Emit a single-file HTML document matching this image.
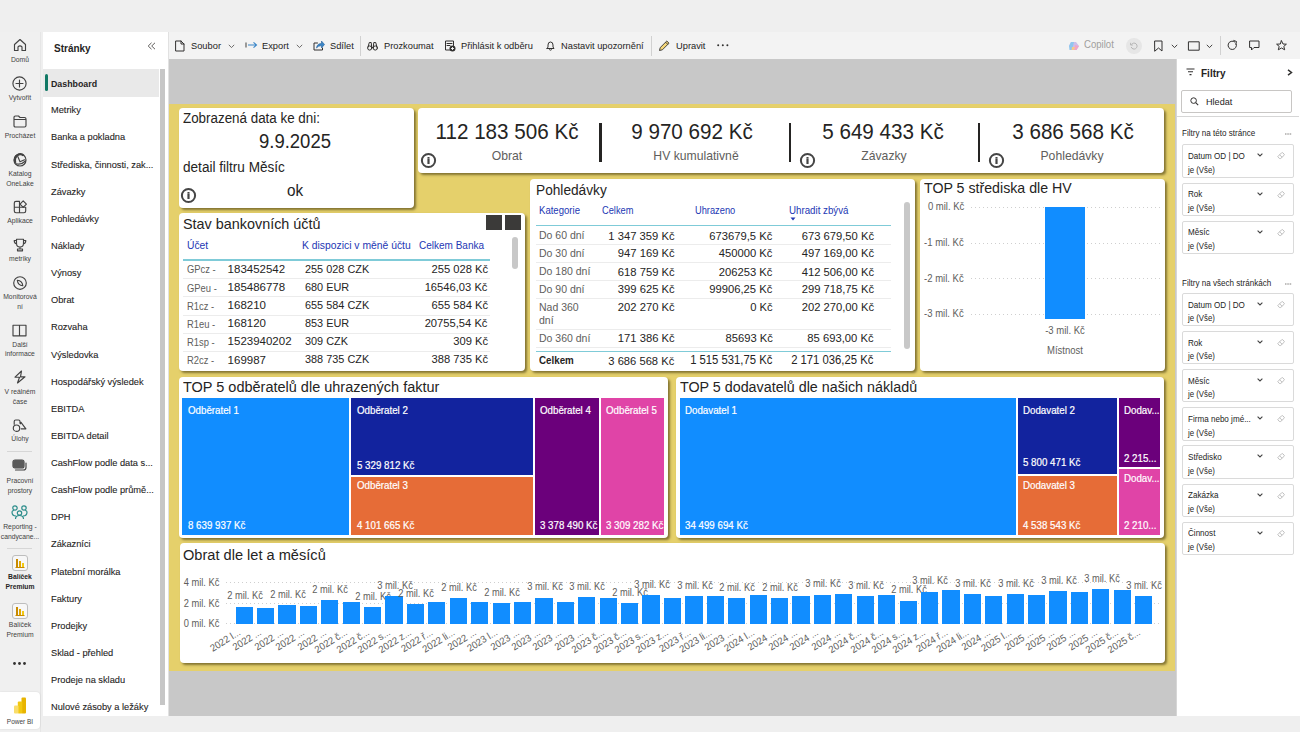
<!DOCTYPE html><html><head><meta charset="utf-8"><style>
*{margin:0;padding:0;box-sizing:border-box}
html,body{width:1300px;height:732px;overflow:hidden;background:#efefef;font-family:"Liberation Sans",sans-serif;color:#252423;position:relative}
.ab{position:absolute}
.t{position:absolute;white-space:nowrap;line-height:1}
.card{position:absolute;background:#fff;border-radius:4px;box-shadow:2px 2px 2.5px rgba(50,40,0,.55)}
svg{position:absolute;overflow:visible}
</style></head><body>
<div class="ab" style="left:0;top:32px;width:41px;height:700px;background:#f0f0f0;border-right:1px solid #e6e6e6"></div>
<div class="ab" style="left:43px;top:32px;width:125px;height:684px;background:#fff"></div>
<div class="ab" style="left:168px;top:32px;width:1132px;height:27px;background:#f3f3f3;border-left:1px solid #e1e1e1"></div>
<div class="ab" style="left:168px;top:59px;width:1008px;height:657px;background:#c8c8c8;border-left:1px solid #e1e1e1"></div>
<div class="ab" style="left:169px;top:104px;width:1006px;height:567px;background:#e5d06b"></div>
<div class="ab" style="left:1176px;top:59px;width:124px;height:657px;background:#fff;border-left:1px solid #d6d6d6"></div>
<svg style="left:13px;top:38px;" width="14" height="14" viewBox="0 0 14 14"><path d="M1.5 6.5 L7 1.5 L12.5 6.5 V12.5 H9 V8.8 Q7 6.8 5 8.8 V12.5 H1.5 Z" fill="none" stroke="#424242" stroke-width="1.15" stroke-linejoin="round" stroke-linecap="round"/></svg>
<div class="t" style="left:-280.00px;width:600px;text-align:center;top:56.96px;font-size:7.14px;color:#424242;font-weight:normal;transform:scaleX(0.952);transform-origin:50% 0;">Domů</div>
<svg style="left:12px;top:76px;" width="15" height="15" viewBox="0 0 15 15"><circle cx="7.5" cy="7.5" r="6.6" fill="none" stroke="#424242" stroke-width="1.15" stroke-linejoin="round" stroke-linecap="round"/><path d="M7.5 4 V11 M4 7.5 H11" fill="none" stroke="#424242" stroke-width="1.15" stroke-linejoin="round" stroke-linecap="round"/></svg>
<div class="t" style="left:-280.00px;width:600px;text-align:center;top:94.66px;font-size:7.14px;color:#424242;font-weight:normal;transform:scaleX(0.952);transform-origin:50% 0;">Vytvořit</div>
<svg style="left:13px;top:115px;" width="14" height="13" viewBox="0 0 14 13"><path d="M1 2.5 Q1 1 2.5 1 H5.5 L7 2.5 H11.5 Q13 2.5 13 4 V10.5 Q13 12 11.5 12 H2.5 Q1 12 1 10.5 Z M1 4.5 H13" fill="none" stroke="#424242" stroke-width="1.15" stroke-linejoin="round" stroke-linecap="round"/></svg>
<div class="t" style="left:-280.00px;width:600px;text-align:center;top:132.96px;font-size:7.14px;color:#424242;font-weight:normal;transform:scaleX(0.952);transform-origin:50% 0;">Procházet</div>
<svg style="left:12.5px;top:152.5px;" width="14" height="14" viewBox="0 0 14 14"><circle cx="7" cy="7" r="6" fill="none" stroke="#424242" stroke-width="1.15" stroke-linejoin="round" stroke-linecap="round"/><path d="M2.2 10 Q0.6 4 6 1.3 Q9 0.8 10.5 2.5" fill="none" stroke="#424242" stroke-width="2.2"/><path d="M4.8 3.5 L7 8.8 L11.5 6.8 M3.5 10.8 Q8 12.2 12.5 8" fill="none" stroke="#424242" stroke-width="1.15" stroke-linejoin="round" stroke-linecap="round"/></svg>
<div class="t" style="left:-280.00px;width:600px;text-align:center;top:171.26px;font-size:7.14px;color:#424242;font-weight:normal;transform:scaleX(0.952);transform-origin:50% 0;">Katalog</div>
<div class="t" style="left:-280.00px;width:600px;text-align:center;top:180.66px;font-size:7.14px;color:#424242;font-weight:normal;transform:scaleX(0.952);transform-origin:50% 0;">OneLake</div>
<svg style="left:12.5px;top:200px;" width="15" height="14" viewBox="0 0 15 14"><path d="M6.5 1.3 H3 Q1.3 1.3 1.3 3 V11 Q1.3 12.7 3 12.7 H11 Q12.7 12.7 12.7 11 V7.2 H6.5 Z M1.3 7.2 H6.5 V12.7" fill="none" stroke="#424242" stroke-width="1.15" stroke-linejoin="round" stroke-linecap="round"/><path d="M10.2 0.9 L13.4 4.1 L10.2 7.3 L7 4.1Z" fill="none" stroke="#424242" stroke-width="1.15" stroke-linejoin="round" stroke-linecap="round"/></svg>
<div class="t" style="left:-280.00px;width:600px;text-align:center;top:218.16px;font-size:7.14px;color:#424242;font-weight:normal;transform:scaleX(0.952);transform-origin:50% 0;">Aplikace</div>
<svg style="left:13px;top:238px;" width="14" height="14" viewBox="0 0 14 14"><path d="M3.5 1.2 H10.5 V5.5 Q10.5 9 7 9 Q3.5 9 3.5 5.5Z M3.5 2.5 H1.2 Q1.2 5.5 3.7 6 M10.5 2.5 H12.8 Q12.8 5.5 10.3 6 M7 9 V11 M4.5 12.8 H9.5 V11 H4.5Z" fill="none" stroke="#424242" stroke-width="1.15" stroke-linejoin="round" stroke-linecap="round"/></svg>
<div class="t" style="left:-280.00px;width:600px;text-align:center;top:256.46px;font-size:7.14px;color:#424242;font-weight:normal;transform:scaleX(0.952);transform-origin:50% 0;">metriky</div>
<svg style="left:12.5px;top:276px;" width="14" height="14" viewBox="0 0 14 14"><circle cx="7" cy="7" r="6.3" fill="none" stroke="#424242" stroke-width="1.15" stroke-linejoin="round" stroke-linecap="round"/><path d="M4.3 4.3 Q9.3 4.8 9.8 9.7 Q4.8 9.3 4.3 4.3Z" fill="none" stroke="#424242" stroke-width="1.15" stroke-linejoin="round" stroke-linecap="round"/></svg>
<div class="t" style="left:-280.00px;width:600px;text-align:center;top:294.36px;font-size:7.14px;color:#424242;font-weight:normal;transform:scaleX(0.952);transform-origin:50% 0;">Monitorová</div>
<div class="t" style="left:-280.00px;width:600px;text-align:center;top:303.86px;font-size:7.14px;color:#424242;font-weight:normal;transform:scaleX(0.952);transform-origin:50% 0;">ní</div>
<svg style="left:12px;top:324px;" width="15" height="13" viewBox="0 0 15 13"><path d="M1 1.2 H14 V11.8 H1Z M7.5 1.2 V11.8" fill="none" stroke="#424242" stroke-width="1.15" stroke-linejoin="round" stroke-linecap="round"/></svg>
<div class="t" style="left:-280.00px;width:600px;text-align:center;top:341.56px;font-size:7.14px;color:#424242;font-weight:normal;transform:scaleX(0.952);transform-origin:50% 0;">Další</div>
<div class="t" style="left:-280.00px;width:600px;text-align:center;top:351.36px;font-size:7.14px;color:#424242;font-weight:normal;transform:scaleX(0.952);transform-origin:50% 0;">informace</div>
<svg style="left:13px;top:370px;" width="14" height="14" viewBox="0 0 14 14"><path d="M8.5 1 L2 7.2 H6.5 L4.5 13 L12 6.8 H7.5Z" fill="none" stroke="#424242" stroke-width="1.15" stroke-linejoin="round" stroke-linecap="round"/></svg>
<div class="t" style="left:-280.00px;width:600px;text-align:center;top:388.96px;font-size:7.14px;color:#424242;font-weight:normal;transform:scaleX(0.952);transform-origin:50% 0;">V reálném</div>
<div class="t" style="left:-280.00px;width:600px;text-align:center;top:398.86px;font-size:7.14px;color:#424242;font-weight:normal;transform:scaleX(0.952);transform-origin:50% 0;">čase</div>
<svg style="left:12px;top:418px;" width="15" height="14" viewBox="0 0 15 14"><circle cx="4.5" cy="10.2" r="3.2" fill="none" stroke="#424242" stroke-width="1.15" stroke-linejoin="round" stroke-linecap="round"/><path d="M2.2 6.3 V3.5 Q2.2 2 3.7 2 H6.5 Q8 2 8 3.5 V5.2 M8.4 5.8 L9 4.3 L13.9 10.8 H9.2" fill="none" stroke="#424242" stroke-width="1.15" stroke-linejoin="round" stroke-linecap="round"/></svg>
<div class="t" style="left:-280.00px;width:600px;text-align:center;top:435.66px;font-size:7.14px;color:#424242;font-weight:normal;transform:scaleX(0.952);transform-origin:50% 0;">Úlohy</div>
<div class="ab" style="left:7px;top:451px;width:25px;height:1px;background:#d6d6d6"></div>
<svg style="left:12px;top:459px;" width="16" height="14" viewBox="0 0 16 14"><rect x="1" y="1" width="11" height="8" rx="2" fill="none" stroke="#424242" stroke-width="1.15" stroke-linejoin="round" stroke-linecap="round"/><path d="M3.5 11 H11.5 Q14 11 14 8.5 V4" fill="none" stroke="#424242" stroke-width="1.15" stroke-linejoin="round" stroke-linecap="round" stroke-width="2.2"/><rect x="1" y="1" width="11" height="8" rx="2" fill="#5a5a5a"/></svg>
<div class="t" style="left:-280.00px;width:600px;text-align:center;top:477.56px;font-size:7.14px;color:#424242;font-weight:normal;transform:scaleX(0.952);transform-origin:50% 0;">Pracovní</div>
<div class="t" style="left:-280.00px;width:600px;text-align:center;top:487.56px;font-size:7.14px;color:#424242;font-weight:normal;transform:scaleX(0.952);transform-origin:50% 0;">prostory</div>
<svg style="left:11px;top:505px;" width="17" height="15" viewBox="0 0 17 15"><circle cx="4" cy="3" r="2.2" fill="none" stroke="#2a8c8a" stroke-width="1.2"/><circle cx="13" cy="3" r="2.2" fill="none" stroke="#2a8c8a" stroke-width="1.2"/><circle cx="8.5" cy="8" r="2.2" fill="none" stroke="#2a8c8a" stroke-width="1.2"/><path d="M1 7 Q1 5.5 3 5.5 M16 7 Q16 5.5 14 5.5 M4.5 14 Q4.5 10.5 8.5 10.5 Q12.5 10.5 12.5 14" fill="none" stroke="#2a8c8a" stroke-width="1.2"/><path d="M1 7 Q1 11 5 11 M16 7 Q16 11 12 11" fill="none" stroke="#2a8c8a" stroke-width="1.2"/></svg>
<div class="t" style="left:-280.00px;width:600px;text-align:center;top:524.36px;font-size:7.14px;color:#424242;font-weight:normal;transform:scaleX(0.952);transform-origin:50% 0;">Reporting -</div>
<div class="t" style="left:-280.00px;width:600px;text-align:center;top:534.36px;font-size:7.14px;color:#424242;font-weight:normal;transform:scaleX(0.952);transform-origin:50% 0;">candycane...</div>
<div class="ab" style="left:7px;top:548px;width:25px;height:1px;background:#d6d6d6"></div>
<svg style="left:12px;top:555px;" width="16" height="16" viewBox="0 0 16 16"><rect x="0.5" y="0.5" width="15" height="15" rx="2.5" fill="#f7f7f7" stroke="#bdbdbd"/><rect x="4" y="4" width="2" height="8" fill="#c88a00"/><rect x="7" y="6" width="2" height="6" fill="#e0a800"/><rect x="10" y="8" width="2" height="4" fill="#f2c811"/><rect x="3.5" y="12" width="9" height="1" fill="#c88a00"/></svg>
<div class="t" style="left:-280.00px;width:600px;text-align:center;top:574.36px;font-size:7.14px;color:#252423;font-weight:bold;transform:scaleX(0.952);transform-origin:50% 0;">Balíček</div>
<div class="t" style="left:-280.00px;width:600px;text-align:center;top:583.86px;font-size:7.14px;color:#252423;font-weight:bold;transform:scaleX(0.952);transform-origin:50% 0;">Premium</div>
<svg style="left:12px;top:603px;" width="16" height="16" viewBox="0 0 16 16"><rect x="0.5" y="0.5" width="15" height="15" rx="2.5" fill="#f7f7f7" stroke="#bdbdbd"/><rect x="4" y="4" width="2" height="8" fill="#c88a00"/><rect x="7" y="6" width="2" height="6" fill="#e0a800"/><rect x="10" y="8" width="2" height="4" fill="#f2c811"/><rect x="3.5" y="12" width="9" height="1" fill="#c88a00"/></svg>
<div class="t" style="left:-280.00px;width:600px;text-align:center;top:622.36px;font-size:7.14px;color:#424242;font-weight:normal;transform:scaleX(0.952);transform-origin:50% 0;">Balíček</div>
<div class="t" style="left:-280.00px;width:600px;text-align:center;top:631.86px;font-size:7.14px;color:#424242;font-weight:normal;transform:scaleX(0.952);transform-origin:50% 0;">Premium</div>
<svg style="left:13px;top:662px;" width="13" height="3" viewBox="0 0 13 3"><circle cx="1.5" cy="1.5" r="1.4" fill="#323130"/><circle cx="6.5" cy="1.5" r="1.4" fill="#323130"/><circle cx="11.5" cy="1.5" r="1.4" fill="#323130"/></svg>
<div class="ab" style="left:0;top:692px;width:40px;height:37px;background:#fff;border-radius:0 4px 4px 0;box-shadow:0 0 2px rgba(0,0,0,.12)"></div>
<svg style="left:13px;top:697px;" width="14" height="17" viewBox="0 0 14 17"><rect x="8.5" y="0.5" width="4.5" height="16" rx="1" fill="#e8b400"/><rect x="4.8" y="4.5" width="4.5" height="12" rx="1" fill="#f2c811"/><rect x="1" y="8.5" width="4.5" height="8" rx="1" fill="#f9dd6b"/></svg>
<div class="t" style="left:-280.00px;width:600px;text-align:center;top:718.62px;font-size:6.83px;color:#424242;font-weight:normal;transform:scaleX(0.952);transform-origin:50% 0;">Power BI</div>
<div class="t" style="left:53.70px;top:42.71px;font-size:10.5px;color:#252423;font-weight:bold;transform:scaleX(0.952);transform-origin:0 0;">Stránky</div>
<svg style="left:147px;top:42px;" width="9" height="8" viewBox="0 0 9 8"><path d="M4.5 0.8 L1.2 4 L4.5 7.2 M8 0.8 L4.7 4 L8 7.2" fill="none" stroke="#605e5c" stroke-width="1"/></svg>
<div class="ab" style="left:43px;top:69px;width:116px;height:27.5px;background:#e9e9e9"></div>
<div class="ab" style="left:45.3px;top:73.7px;width:2.8px;height:17.3px;background:#117865;border-radius:1.5px"></div>
<div class="ab" style="left:159.6px;top:69px;width:5px;height:636.4px;background:#c6c6c6"></div>
<div class="t" style="left:51.20px;top:78.54px;font-size:9.4px;color:#252423;font-weight:bold;transform:scaleX(0.94);transform-origin:0 0;">Dashboard</div>
<div class="t" style="left:51.20px;top:105.33px;font-size:9.8px;color:#252423;font-weight:normal;-webkit-text-stroke:0.1px #252423;transform:scaleX(0.945);transform-origin:0 0;">Metriky</div>
<div class="t" style="left:51.20px;top:132.46px;font-size:9.8px;color:#252423;font-weight:normal;-webkit-text-stroke:0.1px #252423;transform:scaleX(0.945);transform-origin:0 0;">Banka a pokladna</div>
<div class="t" style="left:51.20px;top:159.59px;font-size:9.8px;color:#252423;font-weight:normal;-webkit-text-stroke:0.1px #252423;transform:scaleX(0.945);transform-origin:0 0;">Střediska, činnosti, zak...</div>
<div class="t" style="left:51.20px;top:186.72px;font-size:9.8px;color:#252423;font-weight:normal;-webkit-text-stroke:0.1px #252423;transform:scaleX(0.945);transform-origin:0 0;">Závazky</div>
<div class="t" style="left:51.20px;top:213.85px;font-size:9.8px;color:#252423;font-weight:normal;-webkit-text-stroke:0.1px #252423;transform:scaleX(0.945);transform-origin:0 0;">Pohledávky</div>
<div class="t" style="left:51.20px;top:240.98px;font-size:9.8px;color:#252423;font-weight:normal;-webkit-text-stroke:0.1px #252423;transform:scaleX(0.945);transform-origin:0 0;">Náklady</div>
<div class="t" style="left:51.20px;top:268.11px;font-size:9.8px;color:#252423;font-weight:normal;-webkit-text-stroke:0.1px #252423;transform:scaleX(0.945);transform-origin:0 0;">Výnosy</div>
<div class="t" style="left:51.20px;top:295.24px;font-size:9.8px;color:#252423;font-weight:normal;-webkit-text-stroke:0.1px #252423;transform:scaleX(0.945);transform-origin:0 0;">Obrat</div>
<div class="t" style="left:51.20px;top:322.37px;font-size:9.8px;color:#252423;font-weight:normal;-webkit-text-stroke:0.1px #252423;transform:scaleX(0.945);transform-origin:0 0;">Rozvaha</div>
<div class="t" style="left:51.20px;top:349.50px;font-size:9.8px;color:#252423;font-weight:normal;-webkit-text-stroke:0.1px #252423;transform:scaleX(0.945);transform-origin:0 0;">Výsledovka</div>
<div class="t" style="left:51.20px;top:376.63px;font-size:9.8px;color:#252423;font-weight:normal;-webkit-text-stroke:0.1px #252423;transform:scaleX(0.945);transform-origin:0 0;">Hospodářský výsledek</div>
<div class="t" style="left:51.20px;top:403.76px;font-size:9.8px;color:#252423;font-weight:normal;-webkit-text-stroke:0.1px #252423;transform:scaleX(0.945);transform-origin:0 0;">EBITDA</div>
<div class="t" style="left:51.20px;top:430.89px;font-size:9.8px;color:#252423;font-weight:normal;-webkit-text-stroke:0.1px #252423;transform:scaleX(0.945);transform-origin:0 0;">EBITDA detail</div>
<div class="t" style="left:51.20px;top:458.02px;font-size:9.8px;color:#252423;font-weight:normal;-webkit-text-stroke:0.1px #252423;transform:scaleX(0.945);transform-origin:0 0;">CashFlow podle data s...</div>
<div class="t" style="left:51.20px;top:485.15px;font-size:9.8px;color:#252423;font-weight:normal;-webkit-text-stroke:0.1px #252423;transform:scaleX(0.945);transform-origin:0 0;">CashFlow podle průmě...</div>
<div class="t" style="left:51.20px;top:512.28px;font-size:9.8px;color:#252423;font-weight:normal;-webkit-text-stroke:0.1px #252423;transform:scaleX(0.945);transform-origin:0 0;">DPH</div>
<div class="t" style="left:51.20px;top:539.41px;font-size:9.8px;color:#252423;font-weight:normal;-webkit-text-stroke:0.1px #252423;transform:scaleX(0.945);transform-origin:0 0;">Zákazníci</div>
<div class="t" style="left:51.20px;top:566.54px;font-size:9.8px;color:#252423;font-weight:normal;-webkit-text-stroke:0.1px #252423;transform:scaleX(0.945);transform-origin:0 0;">Platební morálka</div>
<div class="t" style="left:51.20px;top:593.67px;font-size:9.8px;color:#252423;font-weight:normal;-webkit-text-stroke:0.1px #252423;transform:scaleX(0.945);transform-origin:0 0;">Faktury</div>
<div class="t" style="left:51.20px;top:620.80px;font-size:9.8px;color:#252423;font-weight:normal;-webkit-text-stroke:0.1px #252423;transform:scaleX(0.945);transform-origin:0 0;">Prodejky</div>
<div class="t" style="left:51.20px;top:647.93px;font-size:9.8px;color:#252423;font-weight:normal;-webkit-text-stroke:0.1px #252423;transform:scaleX(0.945);transform-origin:0 0;">Sklad - přehled</div>
<div class="t" style="left:51.20px;top:675.06px;font-size:9.8px;color:#252423;font-weight:normal;-webkit-text-stroke:0.1px #252423;transform:scaleX(0.945);transform-origin:0 0;">Prodeje na skladu</div>
<div class="t" style="left:51.20px;top:702.19px;font-size:9.8px;color:#252423;font-weight:normal;-webkit-text-stroke:0.1px #252423;transform:scaleX(0.945);transform-origin:0 0;">Nulové zásoby a ležáky</div>
<svg style="left:175px;top:39.5px;" width="10" height="12" viewBox="0 0 10 12"><path d="M1 1 H6 L9 4 V11 H1Z M6 1 V4 H9" fill="none" stroke="#323130" stroke-width="1" stroke-linejoin="round" stroke-linecap="round"/></svg>
<div class="t" style="left:190.80px;top:40.73px;font-size:9.77px;color:#252423;font-weight:normal;transform:scaleX(0.952);transform-origin:0 0;">Soubor</div>
<svg style="left:227.5px;top:43.5px;" width="7" height="5" viewBox="0 0 7 5"><path d="M0.8 0.8 L3.5 3.6 L6.2 0.8" fill="none" stroke="#605e5c" stroke-width="0.9"/></svg>
<svg style="left:244.5px;top:41px;" width="13" height="8" viewBox="0 0 13 8"><path d="M1 1.5 V6.5" stroke="#605e5c" stroke-width="1.2"/><path d="M3 4 H11.5 M8.5 1.3 L11.5 4 L8.5 6.7" fill="none" stroke="#3a86c8" stroke-width="1.1"/></svg>
<div class="t" style="left:262.00px;top:40.73px;font-size:9.77px;color:#252423;font-weight:normal;transform:scaleX(0.952);transform-origin:0 0;">Export</div>
<svg style="left:296px;top:43.5px;" width="7" height="5" viewBox="0 0 7 5"><path d="M0.8 0.8 L3.5 3.6 L6.2 0.8" fill="none" stroke="#605e5c" stroke-width="0.9"/></svg>
<svg style="left:312.5px;top:39.5px;" width="12" height="11" viewBox="0 0 12 11"><path d="M4.5 3 H1 V10 H9.5 V8" fill="none" stroke="#323130" stroke-width="1" stroke-linejoin="round" stroke-linecap="round"/><path d="M3.5 8 Q4 3.5 8.5 3.5 V1 L11.5 4.5 L8.5 8 V5.6 Q5 5.8 3.5 8Z" fill="#3a86c8" stroke="#245f9a" stroke-width=".6"/></svg>
<div class="t" style="left:329.70px;top:40.73px;font-size:9.77px;color:#252423;font-weight:normal;transform:scaleX(0.952);transform-origin:0 0;">Sdílet</div>
<div class="ab" style="left:360px;top:36px;width:1px;height:20px;background:#d1d1d1"></div>
<svg style="left:367px;top:40.5px;" width="11" height="10" viewBox="0 0 11 10"><circle cx="2.7" cy="7" r="2.1" fill="none" stroke="#323130" stroke-width="1" stroke-linejoin="round" stroke-linecap="round"/><circle cx="8.3" cy="7" r="2.1" fill="none" stroke="#323130" stroke-width="1" stroke-linejoin="round" stroke-linecap="round"/><path d="M1 6 L2.3 1.5 H4.2 L4.7 6 M10 6 L8.7 1.5 H6.8 L6.3 6 M4.7 6.5 H6.3" fill="none" stroke="#323130" stroke-width="1" stroke-linejoin="round" stroke-linecap="round"/></svg>
<div class="t" style="left:383.80px;top:40.73px;font-size:9.77px;color:#252423;font-weight:normal;transform:scaleX(0.952);transform-origin:0 0;">Prozkoumat</div>
<svg style="left:444px;top:39.5px;" width="12" height="12" viewBox="0 0 12 12"><path d="M7 10 H1.5 V1 H9.5 V5.5 M3 3.5 H8 M3 5.5 H6" fill="none" stroke="#323130" stroke-width="1" stroke-linejoin="round" stroke-linecap="round"/><circle cx="8.5" cy="8.5" r="3" fill="#323130"/><path d="M8.5 7 V10 M7 8.5 H10" stroke="#fff" stroke-width=".9"/></svg>
<div class="t" style="left:461.20px;top:40.73px;font-size:9.77px;color:#252423;font-weight:normal;transform:scaleX(0.952);transform-origin:0 0;">Přihlásit k odběru</div>
<svg style="left:546px;top:40.5px;" width="9" height="10" viewBox="0 0 9 10"><path d="M1 7.5 H8 L7 6 V4 Q7 1 4.5 1 Q2 1 2 4 V6Z M3.5 8.8 Q4.5 9.8 5.5 8.8" fill="none" stroke="#323130" stroke-width="1" stroke-linejoin="round" stroke-linecap="round"/></svg>
<div class="t" style="left:561.20px;top:40.73px;font-size:9.77px;color:#252423;font-weight:normal;transform:scaleX(0.952);transform-origin:0 0;">Nastavit upozornění</div>
<div class="ab" style="left:651px;top:36px;width:1px;height:20px;background:#d1d1d1"></div>
<svg style="left:658px;top:39.5px;" width="12" height="12" viewBox="0 0 12 12"><path d="M1.5 10.5 L2.2 7.6 L8.8 1 L11 3.2 L4.4 9.8Z M7.6 2.2 L9.8 4.4" fill="#f5d77a" stroke="#323130" stroke-width=".9" stroke-linejoin="round"/></svg>
<div class="t" style="left:675.60px;top:40.73px;font-size:9.77px;color:#252423;font-weight:normal;transform:scaleX(0.952);transform-origin:0 0;">Upravit</div>
<svg style="left:717px;top:44px;" width="12" height="3" viewBox="0 0 12 3"><circle cx="1.2" cy="1.2" r="1" fill="#323130"/><circle cx="5.8" cy="1.2" r="1" fill="#323130"/><circle cx="10.4" cy="1.2" r="1" fill="#323130"/></svg>
<svg style="left:1067.5px;top:40.5px;" width="12" height="10" viewBox="0 0 12 10"><path d="M3 1 H8 L11 5 L8.5 9 H3.5 L1 5Z" fill="#c9b8e8" opacity=".9"/><path d="M3 1 H6 L4 9 H1.5 L1 5Z" fill="#8fc7ef"/><path d="M7 4 L11 5 L8.5 9 H6Z" fill="#f0a6c8"/><path d="M4 6 L7 6 L6 9 H3.5Z" fill="#f7c98a"/></svg>
<div class="t" style="left:1084.40px;top:40.47px;font-size:10.08px;color:#a19f9d;font-weight:normal;transform:scaleX(0.952);transform-origin:0 0;">Copilot</div>
<div class="ab" style="left:1126px;top:37.5px;width:16px;height:16px;border-radius:50%;background:#e6e6e6"></div>
<svg style="left:1130px;top:41.5px;" width="8" height="8" viewBox="0 0 8 8"><path d="M1.5 2.5 A3 3 0 1 1 1.2 5" fill="none" stroke="#b0b0b0" stroke-width=".9"/><path d="M0.6 0.8 V3 H2.8" fill="none" stroke="#b0b0b0" stroke-width=".9"/></svg>
<svg style="left:1154px;top:39.5px;" width="9" height="12" viewBox="0 0 9 12"><path d="M1 1 H8 V11 L4.5 8 L1 11Z" fill="none" stroke="#323130" stroke-width="1" stroke-linejoin="round" stroke-linecap="round" stroke-width="1.1"/></svg>
<svg style="left:1170.5px;top:43.5px;" width="7" height="5" viewBox="0 0 7 5"><path d="M0.8 0.8 L3.5 3.6 L6.2 0.8" fill="none" stroke="#323130" stroke-width="0.9"/></svg>
<svg style="left:1187.5px;top:40.5px;" width="12" height="10" viewBox="0 0 12 10"><rect x=".8" y=".8" width="10.4" height="8.4" fill="none" stroke="#323130" stroke-width="1" stroke-linejoin="round" stroke-linecap="round" stroke-width="1.1"/></svg>
<svg style="left:1205.5px;top:43.5px;" width="7" height="5" viewBox="0 0 7 5"><path d="M0.8 0.8 L3.5 3.6 L6.2 0.8" fill="none" stroke="#323130" stroke-width="0.9"/></svg>
<div class="ab" style="left:1219.5px;top:36px;width:1px;height:19px;background:#d1d1d1"></div>
<svg style="left:1226.5px;top:40px;" width="11" height="11" viewBox="0 0 11 11"><path d="M9.3 4 A4.2 4.2 0 1 1 7.8 1.9" fill="none" stroke="#323130" stroke-width="1" stroke-linejoin="round" stroke-linecap="round" stroke-width="1.1"/><path d="M6.8 0.5 L9.5 1.5 L8.8 4.2" fill="none" stroke="#323130" stroke-width="1" stroke-linejoin="round" stroke-linecap="round" stroke-width="1.1"/></svg>
<svg style="left:1248.5px;top:40px;" width="11" height="11" viewBox="0 0 11 11"><path d="M1 1 H10 V7.5 H5 L2.5 10 V7.5 H1Z" fill="none" stroke="#323130" stroke-width="1" stroke-linejoin="round" stroke-linecap="round" stroke-width="1.1"/></svg>
<svg style="left:1275.5px;top:40px;" width="11" height="11" viewBox="0 0 11 11"><path d="M5.5 0.8 L7 4 L10.4 4.2 L7.8 6.4 L8.7 9.8 L5.5 8 L2.3 9.8 L3.2 6.4 L0.6 4.2 L4 4Z" fill="none" stroke="#323130" stroke-width="1" stroke-linejoin="round" stroke-linecap="round" stroke-width="1.1"/></svg>
<svg style="left:1185.5px;top:67.5px;" width="9" height="8" viewBox="0 0 9 8"><path d="M0.5 1 H8.5 M2 3.8 H7 M3.5 6.6 H5.5" stroke="#323130" stroke-width="1.1"/></svg>
<div class="t" style="left:1200.80px;top:67.71px;font-size:10.5px;color:#252423;font-weight:bold;transform:scaleX(0.952);transform-origin:0 0;">Filtry</div>
<svg style="left:1286.5px;top:69px;" width="6" height="7" viewBox="0 0 6 7"><path d="M1 0.8 L4.5 3.5 L1 6.2" fill="none" stroke="#323130" stroke-width="1.5"/></svg>
<div class="ab" style="left:1181.3px;top:90px;width:110.5px;height:22.6px;border:1px solid #c8c6c4;border-radius:2px;background:#fff"></div>
<svg style="left:1189.5px;top:96.5px;" width="9" height="9" viewBox="0 0 9 9"><circle cx="3.6" cy="3.6" r="2.8" fill="none" stroke="#323130" stroke-width="1"/><path d="M5.7 5.7 L8.2 8.2" stroke="#323130" stroke-width="1.1"/></svg>
<div class="t" style="left:1205.80px;top:97.02px;font-size:9.55px;color:#252423;font-weight:normal;transform:scaleX(0.952);transform-origin:0 0;">Hledat</div>
<div class="ab" style="left:1177px;top:115.5px;width:122px;height:1.2px;background:#d6d6d6"></div>
<div class="t" style="left:1181.50px;top:129.34px;font-size:8.7px;color:#252423;font-weight:normal;transform:scaleX(0.93);transform-origin:0 0;">Filtry na této stránce</div>
<svg style="left:1285px;top:133.4px;" width="7" height="2" viewBox="0 0 7 2"><path d="M0 1 H7" stroke="#605e5c" stroke-width=".8" stroke-dasharray="1.5 .8"/></svg>
<div class="ab" style="left:1181.8px;top:144.4px;width:112.6px;height:33.3px;border:1px solid #dadada;border-radius:2px;background:#fff"></div>
<div class="t" style="left:1187.80px;top:151.94px;font-size:8.7px;color:#252423;font-weight:normal;transform:scaleX(0.93);transform-origin:0 0;">Datum OD | DO</div>
<div class="t" style="left:1187.80px;top:165.64px;font-size:8.7px;color:#252423;font-weight:normal;transform:scaleX(0.9);transform-origin:0 0;">je (Vše)</div>
<svg style="left:1257px;top:153.4px;" width="6" height="4" viewBox="0 0 6 4"><path d="M0.6 0.6 L3 3 L5.4 0.6" fill="none" stroke="#444" stroke-width="1.1"/></svg>
<svg style="left:1277px;top:152.4px;" width="8" height="7" viewBox="0 0 8 7"><path d="M0.8 4.6 L4.6 0.8 Q5.2 0.3 5.8 0.8 L7.1 2.1 Q7.6 2.7 7.1 3.3 L3.7 6.5 H2.4 Z M2.6 2.8 L5.1 5.2" fill="none" stroke="#b0b0b0" stroke-width=".8" stroke-linejoin="round"/></svg>
<div class="ab" style="left:1181.8px;top:182.6px;width:112.6px;height:33.3px;border:1px solid #dadada;border-radius:2px;background:#fff"></div>
<div class="t" style="left:1187.80px;top:190.14px;font-size:8.7px;color:#252423;font-weight:normal;transform:scaleX(0.93);transform-origin:0 0;">Rok</div>
<div class="t" style="left:1187.80px;top:203.84px;font-size:8.7px;color:#252423;font-weight:normal;transform:scaleX(0.9);transform-origin:0 0;">je (Vše)</div>
<svg style="left:1257px;top:191.60000000000002px;" width="6" height="4" viewBox="0 0 6 4"><path d="M0.6 0.6 L3 3 L5.4 0.6" fill="none" stroke="#444" stroke-width="1.1"/></svg>
<svg style="left:1277px;top:190.60000000000002px;" width="8" height="7" viewBox="0 0 8 7"><path d="M0.8 4.6 L4.6 0.8 Q5.2 0.3 5.8 0.8 L7.1 2.1 Q7.6 2.7 7.1 3.3 L3.7 6.5 H2.4 Z M2.6 2.8 L5.1 5.2" fill="none" stroke="#b0b0b0" stroke-width=".8" stroke-linejoin="round"/></svg>
<div class="ab" style="left:1181.8px;top:220.8px;width:112.6px;height:33.3px;border:1px solid #dadada;border-radius:2px;background:#fff"></div>
<div class="t" style="left:1187.80px;top:228.34px;font-size:8.7px;color:#252423;font-weight:normal;transform:scaleX(0.93);transform-origin:0 0;">Měsíc</div>
<div class="t" style="left:1187.80px;top:242.04px;font-size:8.7px;color:#252423;font-weight:normal;transform:scaleX(0.9);transform-origin:0 0;">je (Vše)</div>
<svg style="left:1257px;top:229.8px;" width="6" height="4" viewBox="0 0 6 4"><path d="M0.6 0.6 L3 3 L5.4 0.6" fill="none" stroke="#444" stroke-width="1.1"/></svg>
<svg style="left:1277px;top:228.8px;" width="8" height="7" viewBox="0 0 8 7"><path d="M0.8 4.6 L4.6 0.8 Q5.2 0.3 5.8 0.8 L7.1 2.1 Q7.6 2.7 7.1 3.3 L3.7 6.5 H2.4 Z M2.6 2.8 L5.1 5.2" fill="none" stroke="#b0b0b0" stroke-width=".8" stroke-linejoin="round"/></svg>
<div class="t" style="left:1181.50px;top:278.74px;font-size:8.7px;color:#252423;font-weight:normal;transform:scaleX(0.93);transform-origin:0 0;">Filtry na všech stránkách</div>
<svg style="left:1285px;top:282.8px;" width="7" height="2" viewBox="0 0 7 2"><path d="M0 1 H7" stroke="#605e5c" stroke-width=".8" stroke-dasharray="1.5 .8"/></svg>
<div class="ab" style="left:1181.8px;top:293.0px;width:112.6px;height:33.3px;border:1px solid #dadada;border-radius:2px;background:#fff"></div>
<div class="t" style="left:1187.80px;top:300.54px;font-size:8.7px;color:#252423;font-weight:normal;transform:scaleX(0.93);transform-origin:0 0;">Datum OD | DO</div>
<div class="t" style="left:1187.80px;top:314.24px;font-size:8.7px;color:#252423;font-weight:normal;transform:scaleX(0.9);transform-origin:0 0;">je (Vše)</div>
<svg style="left:1257px;top:302.0px;" width="6" height="4" viewBox="0 0 6 4"><path d="M0.6 0.6 L3 3 L5.4 0.6" fill="none" stroke="#444" stroke-width="1.1"/></svg>
<svg style="left:1277px;top:301.0px;" width="8" height="7" viewBox="0 0 8 7"><path d="M0.8 4.6 L4.6 0.8 Q5.2 0.3 5.8 0.8 L7.1 2.1 Q7.6 2.7 7.1 3.3 L3.7 6.5 H2.4 Z M2.6 2.8 L5.1 5.2" fill="none" stroke="#b0b0b0" stroke-width=".8" stroke-linejoin="round"/></svg>
<div class="ab" style="left:1181.8px;top:331.1px;width:112.6px;height:33.3px;border:1px solid #dadada;border-radius:2px;background:#fff"></div>
<div class="t" style="left:1187.80px;top:338.64px;font-size:8.7px;color:#252423;font-weight:normal;transform:scaleX(0.93);transform-origin:0 0;">Rok</div>
<div class="t" style="left:1187.80px;top:352.34px;font-size:8.7px;color:#252423;font-weight:normal;transform:scaleX(0.9);transform-origin:0 0;">je (Vše)</div>
<svg style="left:1257px;top:340.1px;" width="6" height="4" viewBox="0 0 6 4"><path d="M0.6 0.6 L3 3 L5.4 0.6" fill="none" stroke="#444" stroke-width="1.1"/></svg>
<svg style="left:1277px;top:339.1px;" width="8" height="7" viewBox="0 0 8 7"><path d="M0.8 4.6 L4.6 0.8 Q5.2 0.3 5.8 0.8 L7.1 2.1 Q7.6 2.7 7.1 3.3 L3.7 6.5 H2.4 Z M2.6 2.8 L5.1 5.2" fill="none" stroke="#b0b0b0" stroke-width=".8" stroke-linejoin="round"/></svg>
<div class="ab" style="left:1181.8px;top:369.2px;width:112.6px;height:33.3px;border:1px solid #dadada;border-radius:2px;background:#fff"></div>
<div class="t" style="left:1187.80px;top:376.74px;font-size:8.7px;color:#252423;font-weight:normal;transform:scaleX(0.93);transform-origin:0 0;">Měsíc</div>
<div class="t" style="left:1187.80px;top:390.44px;font-size:8.7px;color:#252423;font-weight:normal;transform:scaleX(0.9);transform-origin:0 0;">je (Vše)</div>
<svg style="left:1257px;top:378.2px;" width="6" height="4" viewBox="0 0 6 4"><path d="M0.6 0.6 L3 3 L5.4 0.6" fill="none" stroke="#444" stroke-width="1.1"/></svg>
<svg style="left:1277px;top:377.2px;" width="8" height="7" viewBox="0 0 8 7"><path d="M0.8 4.6 L4.6 0.8 Q5.2 0.3 5.8 0.8 L7.1 2.1 Q7.6 2.7 7.1 3.3 L3.7 6.5 H2.4 Z M2.6 2.8 L5.1 5.2" fill="none" stroke="#b0b0b0" stroke-width=".8" stroke-linejoin="round"/></svg>
<div class="ab" style="left:1181.8px;top:407.3px;width:112.6px;height:33.3px;border:1px solid #dadada;border-radius:2px;background:#fff"></div>
<div class="t" style="left:1187.80px;top:414.84px;font-size:8.7px;color:#252423;font-weight:normal;transform:scaleX(0.93);transform-origin:0 0;">Firma nebo jmé...</div>
<div class="t" style="left:1187.80px;top:428.54px;font-size:8.7px;color:#252423;font-weight:normal;transform:scaleX(0.9);transform-origin:0 0;">je (Vše)</div>
<svg style="left:1257px;top:416.3px;" width="6" height="4" viewBox="0 0 6 4"><path d="M0.6 0.6 L3 3 L5.4 0.6" fill="none" stroke="#444" stroke-width="1.1"/></svg>
<svg style="left:1277px;top:415.3px;" width="8" height="7" viewBox="0 0 8 7"><path d="M0.8 4.6 L4.6 0.8 Q5.2 0.3 5.8 0.8 L7.1 2.1 Q7.6 2.7 7.1 3.3 L3.7 6.5 H2.4 Z M2.6 2.8 L5.1 5.2" fill="none" stroke="#b0b0b0" stroke-width=".8" stroke-linejoin="round"/></svg>
<div class="ab" style="left:1181.8px;top:445.4px;width:112.6px;height:33.3px;border:1px solid #dadada;border-radius:2px;background:#fff"></div>
<div class="t" style="left:1187.80px;top:452.94px;font-size:8.7px;color:#252423;font-weight:normal;transform:scaleX(0.93);transform-origin:0 0;">Středisko</div>
<div class="t" style="left:1187.80px;top:466.64px;font-size:8.7px;color:#252423;font-weight:normal;transform:scaleX(0.9);transform-origin:0 0;">je (Vše)</div>
<svg style="left:1257px;top:454.4px;" width="6" height="4" viewBox="0 0 6 4"><path d="M0.6 0.6 L3 3 L5.4 0.6" fill="none" stroke="#444" stroke-width="1.1"/></svg>
<svg style="left:1277px;top:453.4px;" width="8" height="7" viewBox="0 0 8 7"><path d="M0.8 4.6 L4.6 0.8 Q5.2 0.3 5.8 0.8 L7.1 2.1 Q7.6 2.7 7.1 3.3 L3.7 6.5 H2.4 Z M2.6 2.8 L5.1 5.2" fill="none" stroke="#b0b0b0" stroke-width=".8" stroke-linejoin="round"/></svg>
<div class="ab" style="left:1181.8px;top:483.5px;width:112.6px;height:33.3px;border:1px solid #dadada;border-radius:2px;background:#fff"></div>
<div class="t" style="left:1187.80px;top:491.04px;font-size:8.7px;color:#252423;font-weight:normal;transform:scaleX(0.93);transform-origin:0 0;">Zakázka</div>
<div class="t" style="left:1187.80px;top:504.74px;font-size:8.7px;color:#252423;font-weight:normal;transform:scaleX(0.9);transform-origin:0 0;">je (Vše)</div>
<svg style="left:1257px;top:492.5px;" width="6" height="4" viewBox="0 0 6 4"><path d="M0.6 0.6 L3 3 L5.4 0.6" fill="none" stroke="#444" stroke-width="1.1"/></svg>
<svg style="left:1277px;top:491.5px;" width="8" height="7" viewBox="0 0 8 7"><path d="M0.8 4.6 L4.6 0.8 Q5.2 0.3 5.8 0.8 L7.1 2.1 Q7.6 2.7 7.1 3.3 L3.7 6.5 H2.4 Z M2.6 2.8 L5.1 5.2" fill="none" stroke="#b0b0b0" stroke-width=".8" stroke-linejoin="round"/></svg>
<div class="ab" style="left:1181.8px;top:521.6px;width:112.6px;height:33.3px;border:1px solid #dadada;border-radius:2px;background:#fff"></div>
<div class="t" style="left:1187.80px;top:529.14px;font-size:8.7px;color:#252423;font-weight:normal;transform:scaleX(0.93);transform-origin:0 0;">Činnost</div>
<div class="t" style="left:1187.80px;top:542.84px;font-size:8.7px;color:#252423;font-weight:normal;transform:scaleX(0.9);transform-origin:0 0;">je (Vše)</div>
<svg style="left:1257px;top:530.6px;" width="6" height="4" viewBox="0 0 6 4"><path d="M0.6 0.6 L3 3 L5.4 0.6" fill="none" stroke="#444" stroke-width="1.1"/></svg>
<svg style="left:1277px;top:529.6px;" width="8" height="7" viewBox="0 0 8 7"><path d="M0.8 4.6 L4.6 0.8 Q5.2 0.3 5.8 0.8 L7.1 2.1 Q7.6 2.7 7.1 3.3 L3.7 6.5 H2.4 Z M2.6 2.8 L5.1 5.2" fill="none" stroke="#b0b0b0" stroke-width=".8" stroke-linejoin="round"/></svg>
<div class="card" style="left:179.4px;top:107.5px;width:234.2px;height:100.8px"></div>
<div class="t" style="left:182.60px;top:111.09px;font-size:14.07px;color:#252423;font-weight:normal;transform:scaleX(0.952);transform-origin:0 0;">Zobrazená data ke dni:</div>
<div class="t" style="left:258.90px;top:131.55px;font-size:19.43px;color:#252423;font-weight:normal;transform:scaleX(0.952);transform-origin:0 0;">9.9.2025</div>
<div class="t" style="left:182.60px;top:160.11px;font-size:14.28px;color:#252423;font-weight:normal;transform:scaleX(0.952);transform-origin:0 0;">detail filtru Měsíc</div>
<div class="t" style="left:286.80px;top:182.30px;font-size:16.07px;color:#252423;font-weight:normal;transform:scaleX(0.952);transform-origin:0 0;">ok</div>
<svg style="left:181.4px;top:187.5px;" width="15" height="15" viewBox="0 0 15 15"><circle cx="7.5" cy="7.5" r="6.6" fill="none" stroke="#454545" stroke-width="2"/><rect x="6.4" y="6.1" width="2.2" height="5" rx=".5" fill="#454545"/><rect x="6.4" y="3.9" width="2.2" height="1.8" rx=".5" fill="#454545"/></svg>
<div class="card" style="left:418.4px;top:107.7px;width:745.9px;height:65.1px"></div>
<div class="t" style="left:207.10px;width:600px;text-align:center;top:121.02px;font-size:21.6px;color:#252423;font-weight:normal;transform:scaleX(0.955);transform-origin:50% 0;">112 183 506 Kč</div>
<div class="t" style="left:207.10px;width:600px;text-align:center;top:150.36px;font-size:12.81px;color:#605e5c;font-weight:normal;transform:scaleX(0.952);transform-origin:50% 0;">Obrat</div>
<div class="t" style="left:392.40px;width:600px;text-align:center;top:121.02px;font-size:21.6px;color:#252423;font-weight:normal;transform:scaleX(0.955);transform-origin:50% 0;">9 970 692 Kč</div>
<div class="t" style="left:396.10px;width:600px;text-align:center;top:150.36px;font-size:12.81px;color:#605e5c;font-weight:normal;transform:scaleX(0.952);transform-origin:50% 0;">HV kumulativně</div>
<div class="t" style="left:582.70px;width:600px;text-align:center;top:121.02px;font-size:21.6px;color:#252423;font-weight:normal;transform:scaleX(0.955);transform-origin:50% 0;">5 649 433 Kč</div>
<div class="t" style="left:583.80px;width:600px;text-align:center;top:150.36px;font-size:12.81px;color:#605e5c;font-weight:normal;transform:scaleX(0.952);transform-origin:50% 0;">Závazky</div>
<div class="t" style="left:772.70px;width:600px;text-align:center;top:121.02px;font-size:21.6px;color:#252423;font-weight:normal;transform:scaleX(0.955);transform-origin:50% 0;">3 686 568 Kč</div>
<div class="t" style="left:772.00px;width:600px;text-align:center;top:150.36px;font-size:12.81px;color:#605e5c;font-weight:normal;transform:scaleX(0.952);transform-origin:50% 0;">Pohledávky</div>
<div class="ab" style="left:599.4px;top:122.8px;width:2.6px;height:38.8px;background:#252423"></div>
<div class="ab" style="left:788.6px;top:122.8px;width:2.6px;height:38.8px;background:#252423"></div>
<div class="ab" style="left:977.8px;top:122.8px;width:2.6px;height:38.8px;background:#252423"></div>
<svg style="left:421.2px;top:153.0px;" width="15" height="15" viewBox="0 0 15 15"><circle cx="7.5" cy="7.5" r="6.6" fill="none" stroke="#454545" stroke-width="2"/><rect x="6.4" y="6.1" width="2.2" height="5" rx=".5" fill="#454545"/><rect x="6.4" y="3.9" width="2.2" height="1.8" rx=".5" fill="#454545"/></svg>
<svg style="left:799.7px;top:153.4px;" width="15" height="15" viewBox="0 0 15 15"><circle cx="7.5" cy="7.5" r="6.6" fill="none" stroke="#454545" stroke-width="2"/><rect x="6.4" y="6.1" width="2.2" height="5" rx=".5" fill="#454545"/><rect x="6.4" y="3.9" width="2.2" height="1.8" rx=".5" fill="#454545"/></svg>
<svg style="left:988.9px;top:153.4px;" width="15" height="15" viewBox="0 0 15 15"><circle cx="7.5" cy="7.5" r="6.6" fill="none" stroke="#454545" stroke-width="2"/><rect x="6.4" y="6.1" width="2.2" height="5" rx=".5" fill="#454545"/><rect x="6.4" y="3.9" width="2.2" height="1.8" rx=".5" fill="#454545"/></svg>
<div class="card" style="left:179.3px;top:213.4px;width:345.7px;height:157.6px"></div>
<div class="t" style="left:182.50px;top:216.10px;font-size:15.12px;color:#252423;font-weight:normal;transform:scaleX(0.952);transform-origin:0 0;">Stav bankovních účtů</div>
<div class="ab" style="left:486.2px;top:214.7px;width:15.6px;height:15.2px;background:#3b3a39"></div>
<div class="ab" style="left:505.1px;top:214.7px;width:16px;height:15.2px;background:#3b3a39"></div>
<div class="t" style="left:187.20px;top:240.04px;font-size:10.82px;color:#2337b4;font-weight:normal;transform:scaleX(0.952);transform-origin:0 0;">Účet</div>
<div class="t" style="left:301.50px;top:239.99px;font-size:10.88px;color:#2337b4;font-weight:normal;transform:scaleX(0.952);transform-origin:0 0;">K dispozici v měně účtu</div>
<div class="t" style="left:419.20px;top:240.31px;font-size:10.5px;color:#2337b4;font-weight:normal;transform:scaleX(0.952);transform-origin:0 0;">Celkem Banka</div>
<div class="ab" style="left:183.3px;top:259.2px;width:306.6px;height:1.5px;background:#7fcbd8"></div>
<div class="ab" style="left:512px;top:236.8px;width:5.5px;height:32px;background:#c8c8c8;border-radius:3px"></div>
<div class="t" style="left:187.20px;top:264.46px;font-size:10.8px;color:#605e5c;font-weight:normal;transform:scaleX(0.87);transform-origin:0 0;">GPcz -</div>
<div class="t" style="left:227.60px;top:264.27px;font-size:11.5px;color:#252423;font-weight:normal;transform:scaleX(1.0);transform-origin:0 0;">183452542</div>
<div class="t" style="left:304.90px;top:263.79px;font-size:11.0px;color:#252423;font-weight:normal;transform:scaleX(0.99);transform-origin:0 0;">255 028 CZK</div>
<div class="t" style="right:812.10px;top:263.53px;font-size:11.3px;color:#252423;font-weight:normal;transform:scaleX(0.99);transform-origin:100% 0;">255 028 Kč</div>
<div class="ab" style="left:183.3px;top:278.2px;width:306.6px;height:1px;background:#ececec"></div>
<div class="t" style="left:187.20px;top:282.51px;font-size:10.8px;color:#605e5c;font-weight:normal;transform:scaleX(0.87);transform-origin:0 0;">GPeu -</div>
<div class="t" style="left:227.60px;top:282.32px;font-size:11.5px;color:#252423;font-weight:normal;transform:scaleX(1.0);transform-origin:0 0;">185486778</div>
<div class="t" style="left:304.90px;top:281.84px;font-size:11.0px;color:#252423;font-weight:normal;transform:scaleX(0.99);transform-origin:0 0;">680 EUR</div>
<div class="t" style="right:812.10px;top:281.58px;font-size:11.3px;color:#252423;font-weight:normal;transform:scaleX(0.99);transform-origin:100% 0;">16546,03 Kč</div>
<div class="ab" style="left:183.3px;top:296.3px;width:306.6px;height:1px;background:#ececec"></div>
<div class="t" style="left:187.20px;top:300.56px;font-size:10.8px;color:#605e5c;font-weight:normal;transform:scaleX(0.87);transform-origin:0 0;">R1cz -</div>
<div class="t" style="left:227.60px;top:300.37px;font-size:11.5px;color:#252423;font-weight:normal;transform:scaleX(1.0);transform-origin:0 0;">168210</div>
<div class="t" style="left:304.90px;top:299.89px;font-size:11.0px;color:#252423;font-weight:normal;transform:scaleX(0.99);transform-origin:0 0;">655 584 CZK</div>
<div class="t" style="right:812.10px;top:299.63px;font-size:11.3px;color:#252423;font-weight:normal;transform:scaleX(0.99);transform-origin:100% 0;">655 584 Kč</div>
<div class="ab" style="left:183.3px;top:314.5px;width:306.6px;height:1px;background:#ececec"></div>
<div class="t" style="left:187.20px;top:318.61px;font-size:10.8px;color:#605e5c;font-weight:normal;transform:scaleX(0.87);transform-origin:0 0;">R1eu -</div>
<div class="t" style="left:227.60px;top:318.42px;font-size:11.5px;color:#252423;font-weight:normal;transform:scaleX(1.0);transform-origin:0 0;">168120</div>
<div class="t" style="left:304.90px;top:317.94px;font-size:11.0px;color:#252423;font-weight:normal;transform:scaleX(0.99);transform-origin:0 0;">853 EUR</div>
<div class="t" style="right:812.10px;top:317.68px;font-size:11.3px;color:#252423;font-weight:normal;transform:scaleX(0.99);transform-origin:100% 0;">20755,54 Kč</div>
<div class="ab" style="left:183.3px;top:332.6px;width:306.6px;height:1px;background:#ececec"></div>
<div class="t" style="left:187.20px;top:336.66px;font-size:10.8px;color:#605e5c;font-weight:normal;transform:scaleX(0.87);transform-origin:0 0;">R1sp -</div>
<div class="t" style="left:227.60px;top:336.47px;font-size:11.5px;color:#252423;font-weight:normal;transform:scaleX(1.0);transform-origin:0 0;">1523940202</div>
<div class="t" style="left:304.90px;top:335.99px;font-size:11.0px;color:#252423;font-weight:normal;transform:scaleX(0.99);transform-origin:0 0;">309 CZK</div>
<div class="t" style="right:812.10px;top:335.73px;font-size:11.3px;color:#252423;font-weight:normal;transform:scaleX(0.99);transform-origin:100% 0;">309 Kč</div>
<div class="ab" style="left:183.3px;top:350.7px;width:306.6px;height:1px;background:#ececec"></div>
<div class="t" style="left:187.20px;top:354.71px;font-size:10.8px;color:#605e5c;font-weight:normal;transform:scaleX(0.87);transform-origin:0 0;">R2cz -</div>
<div class="t" style="left:227.60px;top:354.52px;font-size:11.5px;color:#252423;font-weight:normal;transform:scaleX(1.0);transform-origin:0 0;">169987</div>
<div class="t" style="left:304.90px;top:354.04px;font-size:11.0px;color:#252423;font-weight:normal;transform:scaleX(0.99);transform-origin:0 0;">388 735 CZK</div>
<div class="t" style="right:812.10px;top:353.78px;font-size:11.3px;color:#252423;font-weight:normal;transform:scaleX(0.99);transform-origin:100% 0;">388 735 Kč</div>
<div class="card" style="left:529.5px;top:179px;width:385.2px;height:192px"></div>
<div class="t" style="left:535.50px;top:182.73px;font-size:14.38px;color:#252423;font-weight:normal;transform:scaleX(0.952);transform-origin:0 0;">Pohledávky</div>
<div class="t" style="left:539.40px;top:205.77px;font-size:10.2px;color:#2337b4;font-weight:normal;transform:scaleX(0.94);transform-origin:0 0;">Kategorie</div>
<div class="t" style="left:602.40px;top:205.77px;font-size:10.2px;color:#2337b4;font-weight:normal;transform:scaleX(0.91);transform-origin:0 0;">Celkem</div>
<div class="t" style="left:695.40px;top:205.77px;font-size:10.2px;color:#2337b4;font-weight:normal;transform:scaleX(0.91);transform-origin:0 0;">Uhrazeno</div>
<div class="t" style="left:789.00px;top:205.77px;font-size:10.2px;color:#2337b4;font-weight:normal;transform:scaleX(0.955);transform-origin:0 0;">Uhradit zbývá</div>
<svg style="left:789.5px;top:217px;" width="6" height="4" viewBox="0 0 6 4"><path d="M0.5 0.5 H5.5 L3 3.5Z" fill="#2337b4"/></svg>
<div class="ab" style="left:535.5px;top:224.7px;width:355.5px;height:1.5px;background:#7fcbd8"></div>
<div class="ab" style="left:904.3px;top:202px;width:5.5px;height:147px;background:#c8c8c8;border-radius:3px"></div>
<div class="t" style="left:539.40px;top:230.46px;font-size:11.03px;color:#605e5c;font-weight:normal;transform:scaleX(0.952);transform-origin:0 0;">Do 60 dní</div>
<div class="t" style="right:625.60px;top:230.51px;font-size:11.8px;color:#252423;font-weight:normal;transform:scaleX(0.952);transform-origin:100% 0;">1 347 359 Kč</div>
<div class="t" style="right:527.50px;top:230.51px;font-size:11.8px;color:#252423;font-weight:normal;transform:scaleX(0.952);transform-origin:100% 0;">673679,5 Kč</div>
<div class="t" style="right:426.40px;top:230.51px;font-size:11.8px;color:#252423;font-weight:normal;transform:scaleX(0.952);transform-origin:100% 0;">673 679,50 Kč</div>
<div class="t" style="left:539.40px;top:248.16px;font-size:11.03px;color:#605e5c;font-weight:normal;transform:scaleX(0.952);transform-origin:0 0;">Do 30 dní</div>
<div class="t" style="right:625.60px;top:248.21px;font-size:11.8px;color:#252423;font-weight:normal;transform:scaleX(0.952);transform-origin:100% 0;">947 169 Kč</div>
<div class="t" style="right:527.50px;top:248.21px;font-size:11.8px;color:#252423;font-weight:normal;transform:scaleX(0.952);transform-origin:100% 0;">450000 Kč</div>
<div class="t" style="right:426.40px;top:248.21px;font-size:11.8px;color:#252423;font-weight:normal;transform:scaleX(0.952);transform-origin:100% 0;">497 169,00 Kč</div>
<div class="t" style="left:539.40px;top:266.46px;font-size:11.03px;color:#605e5c;font-weight:normal;transform:scaleX(0.952);transform-origin:0 0;">Do 180 dní</div>
<div class="t" style="right:625.60px;top:266.51px;font-size:11.8px;color:#252423;font-weight:normal;transform:scaleX(0.952);transform-origin:100% 0;">618 759 Kč</div>
<div class="t" style="right:527.50px;top:266.51px;font-size:11.8px;color:#252423;font-weight:normal;transform:scaleX(0.952);transform-origin:100% 0;">206253 Kč</div>
<div class="t" style="right:426.40px;top:266.51px;font-size:11.8px;color:#252423;font-weight:normal;transform:scaleX(0.952);transform-origin:100% 0;">412 506,00 Kč</div>
<div class="t" style="left:539.40px;top:284.16px;font-size:11.03px;color:#605e5c;font-weight:normal;transform:scaleX(0.952);transform-origin:0 0;">Do 90 dní</div>
<div class="t" style="right:625.60px;top:284.21px;font-size:11.8px;color:#252423;font-weight:normal;transform:scaleX(0.952);transform-origin:100% 0;">399 625 Kč</div>
<div class="t" style="right:527.50px;top:284.21px;font-size:11.8px;color:#252423;font-weight:normal;transform:scaleX(0.952);transform-origin:100% 0;">99906,25 Kč</div>
<div class="t" style="right:426.40px;top:284.21px;font-size:11.8px;color:#252423;font-weight:normal;transform:scaleX(0.952);transform-origin:100% 0;">299 718,75 Kč</div>
<div class="t" style="left:539.40px;top:302.16px;font-size:11.03px;color:#605e5c;font-weight:normal;transform:scaleX(0.952);transform-origin:0 0;">Nad 360</div>
<div class="t" style="left:539.40px;top:315.06px;font-size:11.03px;color:#605e5c;font-weight:normal;transform:scaleX(0.952);transform-origin:0 0;">dní</div>
<div class="t" style="right:625.60px;top:302.21px;font-size:11.8px;color:#252423;font-weight:normal;transform:scaleX(0.952);transform-origin:100% 0;">202 270 Kč</div>
<div class="t" style="right:527.50px;top:302.21px;font-size:11.8px;color:#252423;font-weight:normal;transform:scaleX(0.952);transform-origin:100% 0;">0 Kč</div>
<div class="t" style="right:426.40px;top:302.21px;font-size:11.8px;color:#252423;font-weight:normal;transform:scaleX(0.952);transform-origin:100% 0;">202 270,00 Kč</div>
<div class="t" style="left:539.40px;top:333.06px;font-size:11.03px;color:#605e5c;font-weight:normal;transform:scaleX(0.952);transform-origin:0 0;">Do 360 dní</div>
<div class="t" style="right:625.60px;top:333.11px;font-size:11.8px;color:#252423;font-weight:normal;transform:scaleX(0.952);transform-origin:100% 0;">171 386 Kč</div>
<div class="t" style="right:527.50px;top:333.11px;font-size:11.8px;color:#252423;font-weight:normal;transform:scaleX(0.952);transform-origin:100% 0;">85693 Kč</div>
<div class="t" style="right:426.40px;top:333.11px;font-size:11.8px;color:#252423;font-weight:normal;transform:scaleX(0.952);transform-origin:100% 0;">85 693,00 Kč</div>
<div class="ab" style="left:535.5px;top:244px;width:355.5px;height:1px;background:#ececec"></div>
<div class="ab" style="left:535.5px;top:262px;width:355.5px;height:1px;background:#ececec"></div>
<div class="ab" style="left:535.5px;top:280px;width:355.5px;height:1px;background:#ececec"></div>
<div class="ab" style="left:535.5px;top:298px;width:355.5px;height:1px;background:#ececec"></div>
<div class="ab" style="left:535.5px;top:328.6px;width:355.5px;height:1px;background:#ececec"></div>
<div class="ab" style="left:535.5px;top:346.6px;width:355.5px;height:1px;background:#ececec"></div>
<div class="ab" style="left:535.5px;top:350.7px;width:355.5px;height:1.5px;background:#7fcbd8"></div>
<div class="t" style="left:539.40px;top:355.89px;font-size:10.29px;color:#252423;font-weight:bold;transform:scaleX(0.952);transform-origin:0 0;">Celkem</div>
<div class="t" style="right:625.60px;top:354.85px;font-size:11.76px;color:#252423;font-weight:normal;transform:scaleX(0.952);transform-origin:100% 0;">3 686 568 Kč</div>
<div class="t" style="right:527.50px;top:354.75px;font-size:11.87px;color:#252423;font-weight:normal;transform:scaleX(0.952);transform-origin:100% 0;">1 515 531,75 Kč</div>
<div class="t" style="right:426.40px;top:354.75px;font-size:11.87px;color:#252423;font-weight:normal;transform:scaleX(0.952);transform-origin:100% 0;">2 171 036,25 Kč</div>
<div class="card" style="left:920px;top:179px;width:244.5px;height:192.2px"></div>
<div class="t" style="left:924.20px;top:180.58px;font-size:14.91px;color:#252423;font-weight:normal;transform:scaleX(0.952);transform-origin:0 0;">TOP 5 střediska dle HV</div>
<div class="t" style="right:335.90px;top:202.23px;font-size:10px;color:#605e5c;font-weight:normal;transform:scaleX(0.95);transform-origin:100% 0;">0 mil. Kč</div>
<div class="ab" style="left:970.7px;top:206.7px;width:190.7px;height:1px;background:linear-gradient(to right,#cfcfcf 1.5px,transparent 1.5px);background-size:4px 1px"></div>
<div class="t" style="right:335.90px;top:238.34px;font-size:10px;color:#605e5c;font-weight:normal;transform:scaleX(0.95);transform-origin:100% 0;">-1 mil. Kč</div>
<div class="ab" style="left:970.7px;top:242.8px;width:190.7px;height:1px;background:linear-gradient(to right,#cfcfcf 1.5px,transparent 1.5px);background-size:4px 1px"></div>
<div class="t" style="right:335.90px;top:273.94px;font-size:10px;color:#605e5c;font-weight:normal;transform:scaleX(0.95);transform-origin:100% 0;">-2 mil. Kč</div>
<div class="ab" style="left:970.7px;top:278.4px;width:190.7px;height:1px;background:linear-gradient(to right,#cfcfcf 1.5px,transparent 1.5px);background-size:4px 1px"></div>
<div class="t" style="right:335.90px;top:309.44px;font-size:10px;color:#605e5c;font-weight:normal;transform:scaleX(0.95);transform-origin:100% 0;">-3 mil. Kč</div>
<div class="ab" style="left:970.7px;top:313.9px;width:190.7px;height:1px;background:linear-gradient(to right,#cfcfcf 1.5px,transparent 1.5px);background-size:4px 1px"></div>
<div class="ab" style="left:1045.3px;top:207.2px;width:39.6px;height:112.1px;background:#118dff"></div>
<div class="t" style="left:765.00px;width:600px;text-align:center;top:325.84px;font-size:10px;color:#605e5c;font-weight:normal;transform:scaleX(0.95);transform-origin:50% 0;">-3 mil. Kč</div>
<div class="t" style="left:765.00px;width:600px;text-align:center;top:346.34px;font-size:10px;color:#605e5c;font-weight:normal;transform:scaleX(0.95);transform-origin:50% 0;">Místnost</div>
<div class="card" style="left:179.3px;top:376.7px;width:488.4px;height:161.1px"></div>
<div class="t" style="left:183.00px;top:378.51px;font-size:15.23px;color:#252423;font-weight:normal;transform:scaleX(0.952);transform-origin:0 0;">TOP 5 odběratelů dle uhrazených faktur</div>
<div class="ab" style="left:182.4px;top:398px;width:167.1px;height:137.1px;background:#118dff"></div>
<div class="t" style="left:187.60px;top:405.65px;font-size:10.1px;color:#fff;font-weight:normal;-webkit-text-stroke:0.2px #fff;transform:scaleX(0.965);transform-origin:0 0;">Odběratel 1</div>
<div class="t" style="left:187.60px;top:521.15px;font-size:10.1px;color:#fff;font-weight:normal;-webkit-text-stroke:0.2px #fff;transform:scaleX(0.965);transform-origin:0 0;">8 639 937 Kč</div>
<div class="ab" style="left:351.4px;top:398px;width:181.8px;height:76.9px;background:#12239e"></div>
<div class="t" style="left:356.60px;top:405.65px;font-size:10.1px;color:#fff;font-weight:normal;-webkit-text-stroke:0.2px #fff;transform:scaleX(0.965);transform-origin:0 0;">Odběratel 2</div>
<div class="t" style="left:356.60px;top:460.95px;font-size:10.1px;color:#fff;font-weight:normal;-webkit-text-stroke:0.2px #fff;transform:scaleX(0.965);transform-origin:0 0;">5 329 812 Kč</div>
<div class="ab" style="left:351.4px;top:476.6px;width:181.8px;height:58.5px;background:#e66c37"></div>
<div class="t" style="left:356.60px;top:480.75px;font-size:10.1px;color:#fff;font-weight:normal;-webkit-text-stroke:0.2px #fff;transform:scaleX(0.965);transform-origin:0 0;">Odběratel 3</div>
<div class="t" style="left:356.60px;top:521.15px;font-size:10.1px;color:#fff;font-weight:normal;-webkit-text-stroke:0.2px #fff;transform:scaleX(0.965);transform-origin:0 0;">4 101 665 Kč</div>
<div class="ab" style="left:535.2px;top:398px;width:64.1px;height:137.1px;background:#6b007b"></div>
<div class="t" style="left:540.40px;top:405.65px;font-size:10.1px;color:#fff;font-weight:normal;-webkit-text-stroke:0.2px #fff;transform:scaleX(0.965);transform-origin:0 0;">Odběratel 4</div>
<div class="t" style="left:540.40px;top:521.15px;font-size:10.1px;color:#fff;font-weight:normal;-webkit-text-stroke:0.2px #fff;transform:scaleX(0.965);transform-origin:0 0;">3 378 490 Kč</div>
<div class="ab" style="left:601.2px;top:398px;width:63.0px;height:137.1px;background:#e044a7"></div>
<div class="t" style="left:606.40px;top:405.65px;font-size:10.1px;color:#fff;font-weight:normal;-webkit-text-stroke:0.2px #fff;transform:scaleX(0.965);transform-origin:0 0;">Odběratel 5</div>
<div class="t" style="left:606.40px;top:521.15px;font-size:10.1px;color:#fff;font-weight:normal;-webkit-text-stroke:0.2px #fff;transform:scaleX(0.965);transform-origin:0 0;">3 309 282 Kč</div>
<div class="card" style="left:675.9px;top:376.5px;width:488.6px;height:161.3px"></div>
<div class="t" style="left:679.90px;top:378.69px;font-size:15.02px;color:#252423;font-weight:normal;transform:scaleX(0.952);transform-origin:0 0;">TOP 5 dodavatelů dle našich nákladů</div>
<div class="ab" style="left:679.9px;top:398px;width:336.2px;height:137.0px;background:#118dff"></div>
<div class="t" style="left:685.10px;top:405.65px;font-size:10.1px;color:#fff;font-weight:normal;-webkit-text-stroke:0.2px #fff;transform:scaleX(0.965);transform-origin:0 0;">Dodavatel 1</div>
<div class="t" style="left:685.10px;top:521.05px;font-size:10.1px;color:#fff;font-weight:normal;-webkit-text-stroke:0.2px #fff;transform:scaleX(0.965);transform-origin:0 0;">34 499 694 Kč</div>
<div class="ab" style="left:1018.1px;top:398px;width:98.9px;height:76.3px;background:#12239e"></div>
<div class="t" style="left:1023.30px;top:406.05px;font-size:10.1px;color:#fff;font-weight:normal;-webkit-text-stroke:0.2px #fff;transform:scaleX(0.965);transform-origin:0 0;">Dodavatel 2</div>
<div class="t" style="left:1023.30px;top:458.45px;font-size:10.1px;color:#fff;font-weight:normal;-webkit-text-stroke:0.2px #fff;transform:scaleX(0.965);transform-origin:0 0;">5 800 471 Kč</div>
<div class="ab" style="left:1018.1px;top:475.9px;width:98.9px;height:59.1px;background:#e66c37"></div>
<div class="t" style="left:1023.30px;top:480.85px;font-size:10.1px;color:#fff;font-weight:normal;-webkit-text-stroke:0.2px #fff;transform:scaleX(0.965);transform-origin:0 0;">Dodavatel 3</div>
<div class="t" style="left:1023.30px;top:521.05px;font-size:10.1px;color:#fff;font-weight:normal;-webkit-text-stroke:0.2px #fff;transform:scaleX(0.965);transform-origin:0 0;">4 538 543 Kč</div>
<div class="ab" style="left:1118.9px;top:398px;width:40.9px;height:68.8px;background:#6b007b"></div>
<div class="t" style="left:1124.10px;top:406.15px;font-size:10.1px;color:#fff;font-weight:normal;-webkit-text-stroke:0.2px #fff;transform:scaleX(0.965);transform-origin:0 0;">Dodav...</div>
<div class="t" style="left:1124.10px;top:453.85px;font-size:10.1px;color:#fff;font-weight:normal;-webkit-text-stroke:0.2px #fff;transform:scaleX(0.965);transform-origin:0 0;">2 215...</div>
<div class="ab" style="left:1118.9px;top:468.7px;width:40.9px;height:66.3px;background:#e044a7"></div>
<div class="t" style="left:1124.10px;top:473.65px;font-size:10.1px;color:#fff;font-weight:normal;-webkit-text-stroke:0.2px #fff;transform:scaleX(0.965);transform-origin:0 0;">Dodav...</div>
<div class="t" style="left:1124.10px;top:521.05px;font-size:10.1px;color:#fff;font-weight:normal;-webkit-text-stroke:0.2px #fff;transform:scaleX(0.965);transform-origin:0 0;">2 210...</div>
<div class="card" style="left:179.5px;top:543.2px;width:985px;height:120.1px"></div>
<div class="t" style="left:182.90px;top:547.12px;font-size:15.33px;color:#252423;font-weight:normal;transform:scaleX(0.952);transform-origin:0 0;">Obrat dle let a měsíců</div>
<div class="t" style="right:1080.20px;top:577.63px;font-size:10px;color:#605e5c;font-weight:normal;transform:scaleX(0.93);transform-origin:100% 0;">4 mil. Kč</div>
<div class="ab" style="left:225.8px;top:582.0px;width:935px;height:1px;background:linear-gradient(to right,#cfcfcf 1.5px,transparent 1.5px);background-size:4px 1px"></div>
<div class="t" style="right:1080.20px;top:598.53px;font-size:10px;color:#605e5c;font-weight:normal;transform:scaleX(0.93);transform-origin:100% 0;">2 mil. Kč</div>
<div class="ab" style="left:225.8px;top:602.9px;width:935px;height:1px;background:linear-gradient(to right,#cfcfcf 1.5px,transparent 1.5px);background-size:4px 1px"></div>
<div class="t" style="right:1080.20px;top:618.93px;font-size:10px;color:#605e5c;font-weight:normal;transform:scaleX(0.93);transform-origin:100% 0;">0 mil. Kč</div>
<div class="ab" style="left:225.8px;top:623.3px;width:935px;height:1px;background:linear-gradient(to right,#cfcfcf 1.5px,transparent 1.5px);background-size:4px 1px"></div>
<div class="ab" style="left:235.50px;top:606.6px;width:17.2px;height:17.2px;background:#118dff"></div>
<div class="t" style="left:-55.30px;width:600px;text-align:center;top:591.34px;font-size:10px;color:#605e5c;font-weight:normal;transform:scaleX(0.93);transform-origin:50% 0;">2 mil. Kč</div>
<div class="t" style="right:1058.60px;top:626.13px;font-size:10px;color:#605e5c;transform-origin:100% 85%;transform:rotate(-32deg) scaleX(0.95)">2022 l...</div>
<div class="ab" style="left:256.92px;top:608.1px;width:17.2px;height:15.7px;background:#118dff"></div>
<div class="t" style="right:1037.18px;top:626.13px;font-size:10px;color:#605e5c;transform-origin:100% 85%;transform:rotate(-32deg) scaleX(0.95)">2022 ...</div>
<div class="ab" style="left:278.34px;top:604.9px;width:17.2px;height:18.9px;background:#118dff"></div>
<div class="t" style="left:-12.46px;width:600px;text-align:center;top:589.63px;font-size:10px;color:#605e5c;font-weight:normal;transform:scaleX(0.93);transform-origin:50% 0;">2 mil. Kč</div>
<div class="t" style="right:1015.76px;top:626.13px;font-size:10px;color:#605e5c;transform-origin:100% 85%;transform:rotate(-32deg) scaleX(0.95)">2022 ...</div>
<div class="ab" style="left:299.76px;top:606.2px;width:17.2px;height:17.6px;background:#118dff"></div>
<div class="t" style="right:994.34px;top:626.13px;font-size:10px;color:#605e5c;transform-origin:100% 85%;transform:rotate(-32deg) scaleX(0.95)">2022 ...</div>
<div class="ab" style="left:321.18px;top:600.2px;width:17.2px;height:23.6px;background:#118dff"></div>
<div class="t" style="left:30.38px;width:600px;text-align:center;top:584.94px;font-size:10px;color:#605e5c;font-weight:normal;transform:scaleX(0.93);transform-origin:50% 0;">2 mil. Kč</div>
<div class="t" style="right:972.92px;top:626.13px;font-size:10px;color:#605e5c;transform-origin:100% 85%;transform:rotate(-32deg) scaleX(0.95)">2022 ...</div>
<div class="ab" style="left:342.60px;top:602.3px;width:17.2px;height:21.5px;background:#118dff"></div>
<div class="t" style="right:951.50px;top:626.13px;font-size:10px;color:#605e5c;transform-origin:100% 85%;transform:rotate(-32deg) scaleX(0.95)">2022 č...</div>
<div class="ab" style="left:364.02px;top:607px;width:17.2px;height:16.8px;background:#118dff"></div>
<div class="t" style="left:73.22px;width:600px;text-align:center;top:591.74px;font-size:10px;color:#605e5c;font-weight:normal;transform:scaleX(0.93);transform-origin:50% 0;">2 mil. Kč</div>
<div class="t" style="right:930.08px;top:626.13px;font-size:10px;color:#605e5c;transform-origin:100% 85%;transform:rotate(-32deg) scaleX(0.95)">2022 č...</div>
<div class="ab" style="left:385.44px;top:596.3px;width:17.2px;height:27.5px;background:#118dff"></div>
<div class="t" style="left:94.64px;width:600px;text-align:center;top:581.03px;font-size:10px;color:#605e5c;font-weight:normal;transform:scaleX(0.93);transform-origin:50% 0;">3 mil. Kč</div>
<div class="t" style="right:908.66px;top:626.13px;font-size:10px;color:#605e5c;transform-origin:100% 85%;transform:rotate(-32deg) scaleX(0.95)">2022 s...</div>
<div class="ab" style="left:406.86px;top:604px;width:17.2px;height:19.8px;background:#118dff"></div>
<div class="t" style="left:116.06px;width:600px;text-align:center;top:588.74px;font-size:10px;color:#605e5c;font-weight:normal;transform:scaleX(0.93);transform-origin:50% 0;">2 mil. Kč</div>
<div class="t" style="right:887.24px;top:626.13px;font-size:10px;color:#605e5c;transform-origin:100% 85%;transform:rotate(-32deg) scaleX(0.95)">2022 z...</div>
<div class="ab" style="left:428.28px;top:601.7px;width:17.2px;height:22.1px;background:#118dff"></div>
<div class="t" style="right:865.82px;top:626.13px;font-size:10px;color:#605e5c;transform-origin:100% 85%;transform:rotate(-32deg) scaleX(0.95)">2022 ř...</div>
<div class="ab" style="left:449.70px;top:598.2px;width:17.2px;height:25.6px;background:#118dff"></div>
<div class="t" style="left:158.90px;width:600px;text-align:center;top:582.94px;font-size:10px;color:#605e5c;font-weight:normal;transform:scaleX(0.93);transform-origin:50% 0;">2 mil. Kč</div>
<div class="t" style="right:844.40px;top:626.13px;font-size:10px;color:#605e5c;transform-origin:100% 85%;transform:rotate(-32deg) scaleX(0.95)">2022 li...</div>
<div class="ab" style="left:471.12px;top:601.9px;width:17.2px;height:21.9px;background:#118dff"></div>
<div class="t" style="right:822.98px;top:626.13px;font-size:10px;color:#605e5c;transform-origin:100% 85%;transform:rotate(-32deg) scaleX(0.95)">2022 ...</div>
<div class="ab" style="left:492.54px;top:603px;width:17.2px;height:20.8px;background:#118dff"></div>
<div class="t" style="left:201.74px;width:600px;text-align:center;top:587.74px;font-size:10px;color:#605e5c;font-weight:normal;transform:scaleX(0.93);transform-origin:50% 0;">2 mil. Kč</div>
<div class="t" style="right:801.56px;top:626.13px;font-size:10px;color:#605e5c;transform-origin:100% 85%;transform:rotate(-32deg) scaleX(0.95)">2023 l...</div>
<div class="ab" style="left:513.96px;top:602.3px;width:17.2px;height:21.5px;background:#118dff"></div>
<div class="t" style="right:780.14px;top:626.13px;font-size:10px;color:#605e5c;transform-origin:100% 85%;transform:rotate(-32deg) scaleX(0.95)">2023 ...</div>
<div class="ab" style="left:535.38px;top:597.6px;width:17.2px;height:26.2px;background:#118dff"></div>
<div class="t" style="left:244.58px;width:600px;text-align:center;top:582.34px;font-size:10px;color:#605e5c;font-weight:normal;transform:scaleX(0.93);transform-origin:50% 0;">3 mil. Kč</div>
<div class="t" style="right:758.72px;top:626.13px;font-size:10px;color:#605e5c;transform-origin:100% 85%;transform:rotate(-32deg) scaleX(0.95)">2023 ...</div>
<div class="ab" style="left:556.80px;top:601.9px;width:17.2px;height:21.9px;background:#118dff"></div>
<div class="t" style="right:737.30px;top:626.13px;font-size:10px;color:#605e5c;transform-origin:100% 85%;transform:rotate(-32deg) scaleX(0.95)">2023 ...</div>
<div class="ab" style="left:578.22px;top:596.9px;width:17.2px;height:26.9px;background:#118dff"></div>
<div class="t" style="left:287.42px;width:600px;text-align:center;top:581.63px;font-size:10px;color:#605e5c;font-weight:normal;transform:scaleX(0.93);transform-origin:50% 0;">3 mil. Kč</div>
<div class="t" style="right:715.88px;top:626.13px;font-size:10px;color:#605e5c;transform-origin:100% 85%;transform:rotate(-32deg) scaleX(0.95)">2023 ...</div>
<div class="ab" style="left:599.64px;top:598.4px;width:17.2px;height:25.4px;background:#118dff"></div>
<div class="t" style="right:694.46px;top:626.13px;font-size:10px;color:#605e5c;transform-origin:100% 85%;transform:rotate(-32deg) scaleX(0.95)">2023 č...</div>
<div class="ab" style="left:621.06px;top:603.4px;width:17.2px;height:20.4px;background:#118dff"></div>
<div class="t" style="left:330.26px;width:600px;text-align:center;top:588.13px;font-size:10px;color:#605e5c;font-weight:normal;transform:scaleX(0.93);transform-origin:50% 0;">2 mil. Kč</div>
<div class="t" style="right:673.04px;top:626.13px;font-size:10px;color:#605e5c;transform-origin:100% 85%;transform:rotate(-32deg) scaleX(0.95)">2023 č...</div>
<div class="ab" style="left:642.48px;top:594.8px;width:17.2px;height:29.0px;background:#118dff"></div>
<div class="t" style="left:351.68px;width:600px;text-align:center;top:579.53px;font-size:10px;color:#605e5c;font-weight:normal;transform:scaleX(0.93);transform-origin:50% 0;">3 mil. Kč</div>
<div class="t" style="right:651.62px;top:626.13px;font-size:10px;color:#605e5c;transform-origin:100% 85%;transform:rotate(-32deg) scaleX(0.95)">2023 s...</div>
<div class="ab" style="left:663.90px;top:598.4px;width:17.2px;height:25.4px;background:#118dff"></div>
<div class="t" style="right:630.20px;top:626.13px;font-size:10px;color:#605e5c;transform-origin:100% 85%;transform:rotate(-32deg) scaleX(0.95)">2023 z...</div>
<div class="ab" style="left:685.32px;top:596.3px;width:17.2px;height:27.5px;background:#118dff"></div>
<div class="t" style="left:394.52px;width:600px;text-align:center;top:581.03px;font-size:10px;color:#605e5c;font-weight:normal;transform:scaleX(0.93);transform-origin:50% 0;">3 mil. Kč</div>
<div class="t" style="right:608.78px;top:626.13px;font-size:10px;color:#605e5c;transform-origin:100% 85%;transform:rotate(-32deg) scaleX(0.95)">2023 ř...</div>
<div class="ab" style="left:706.74px;top:595.8px;width:17.2px;height:28.0px;background:#118dff"></div>
<div class="t" style="right:587.36px;top:626.13px;font-size:10px;color:#605e5c;transform-origin:100% 85%;transform:rotate(-32deg) scaleX(0.95)">2023 li...</div>
<div class="ab" style="left:728.16px;top:598px;width:17.2px;height:25.8px;background:#118dff"></div>
<div class="t" style="left:437.36px;width:600px;text-align:center;top:582.74px;font-size:10px;color:#605e5c;font-weight:normal;transform:scaleX(0.93);transform-origin:50% 0;">2 mil. Kč</div>
<div class="t" style="right:565.94px;top:626.13px;font-size:10px;color:#605e5c;transform-origin:100% 85%;transform:rotate(-32deg) scaleX(0.95)">2023 ...</div>
<div class="ab" style="left:749.58px;top:595.2px;width:17.2px;height:28.6px;background:#118dff"></div>
<div class="t" style="right:544.52px;top:626.13px;font-size:10px;color:#605e5c;transform-origin:100% 85%;transform:rotate(-32deg) scaleX(0.95)">2024 l...</div>
<div class="ab" style="left:771.00px;top:598px;width:17.2px;height:25.8px;background:#118dff"></div>
<div class="t" style="left:480.20px;width:600px;text-align:center;top:582.74px;font-size:10px;color:#605e5c;font-weight:normal;transform:scaleX(0.93);transform-origin:50% 0;">2 mil. Kč</div>
<div class="t" style="right:523.10px;top:626.13px;font-size:10px;color:#605e5c;transform-origin:100% 85%;transform:rotate(-32deg) scaleX(0.95)">2024 ...</div>
<div class="ab" style="left:792.42px;top:595.8px;width:17.2px;height:28.0px;background:#118dff"></div>
<div class="t" style="right:501.68px;top:626.13px;font-size:10px;color:#605e5c;transform-origin:100% 85%;transform:rotate(-32deg) scaleX(0.95)">2024 ...</div>
<div class="ab" style="left:813.84px;top:594.5px;width:17.2px;height:29.3px;background:#118dff"></div>
<div class="t" style="left:523.04px;width:600px;text-align:center;top:579.24px;font-size:10px;color:#605e5c;font-weight:normal;transform:scaleX(0.93);transform-origin:50% 0;">3 mil. Kč</div>
<div class="t" style="right:480.26px;top:626.13px;font-size:10px;color:#605e5c;transform-origin:100% 85%;transform:rotate(-32deg) scaleX(0.95)">2024 ...</div>
<div class="ab" style="left:835.26px;top:593.6px;width:17.2px;height:30.2px;background:#118dff"></div>
<div class="t" style="right:458.84px;top:626.13px;font-size:10px;color:#605e5c;transform-origin:100% 85%;transform:rotate(-32deg) scaleX(0.95)">2024 ...</div>
<div class="ab" style="left:856.68px;top:596.2px;width:17.2px;height:27.6px;background:#118dff"></div>
<div class="t" style="left:565.88px;width:600px;text-align:center;top:580.94px;font-size:10px;color:#605e5c;font-weight:normal;transform:scaleX(0.93);transform-origin:50% 0;">3 mil. Kč</div>
<div class="t" style="right:437.42px;top:626.13px;font-size:10px;color:#605e5c;transform-origin:100% 85%;transform:rotate(-32deg) scaleX(0.95)">2024 č...</div>
<div class="ab" style="left:878.10px;top:594.7px;width:17.2px;height:29.1px;background:#118dff"></div>
<div class="t" style="right:416.00px;top:626.13px;font-size:10px;color:#605e5c;transform-origin:100% 85%;transform:rotate(-32deg) scaleX(0.95)">2024 č...</div>
<div class="ab" style="left:899.52px;top:600.5px;width:17.2px;height:23.3px;background:#118dff"></div>
<div class="t" style="left:608.72px;width:600px;text-align:center;top:585.24px;font-size:10px;color:#605e5c;font-weight:normal;transform:scaleX(0.93);transform-origin:50% 0;">2 mil. Kč</div>
<div class="t" style="right:394.58px;top:626.13px;font-size:10px;color:#605e5c;transform-origin:100% 85%;transform:rotate(-32deg) scaleX(0.95)">2024 s...</div>
<div class="ab" style="left:920.94px;top:591.5px;width:17.2px;height:32.3px;background:#118dff"></div>
<div class="t" style="left:630.14px;width:600px;text-align:center;top:576.24px;font-size:10px;color:#605e5c;font-weight:normal;transform:scaleX(0.93);transform-origin:50% 0;">3 mil. Kč</div>
<div class="t" style="right:373.16px;top:626.13px;font-size:10px;color:#605e5c;transform-origin:100% 85%;transform:rotate(-32deg) scaleX(0.95)">2024 z...</div>
<div class="ab" style="left:942.36px;top:590.4px;width:17.2px;height:33.4px;background:#118dff"></div>
<div class="t" style="right:351.74px;top:626.13px;font-size:10px;color:#605e5c;transform-origin:100% 85%;transform:rotate(-32deg) scaleX(0.95)">2024 ř...</div>
<div class="ab" style="left:963.78px;top:594.3px;width:17.2px;height:29.5px;background:#118dff"></div>
<div class="t" style="left:672.98px;width:600px;text-align:center;top:579.03px;font-size:10px;color:#605e5c;font-weight:normal;transform:scaleX(0.93);transform-origin:50% 0;">3 mil. Kč</div>
<div class="t" style="right:330.32px;top:626.13px;font-size:10px;color:#605e5c;transform-origin:100% 85%;transform:rotate(-32deg) scaleX(0.95)">2024 li...</div>
<div class="ab" style="left:985.20px;top:595.8px;width:17.2px;height:28.0px;background:#118dff"></div>
<div class="t" style="right:308.90px;top:626.13px;font-size:10px;color:#605e5c;transform-origin:100% 85%;transform:rotate(-32deg) scaleX(0.95)">2024 ...</div>
<div class="ab" style="left:1006.62px;top:594.4px;width:17.2px;height:29.4px;background:#118dff"></div>
<div class="t" style="left:715.82px;width:600px;text-align:center;top:579.13px;font-size:10px;color:#605e5c;font-weight:normal;transform:scaleX(0.93);transform-origin:50% 0;">3 mil. Kč</div>
<div class="t" style="right:287.48px;top:626.13px;font-size:10px;color:#605e5c;transform-origin:100% 85%;transform:rotate(-32deg) scaleX(0.95)">2025 l...</div>
<div class="ab" style="left:1028.04px;top:594.8px;width:17.2px;height:29.0px;background:#118dff"></div>
<div class="t" style="right:266.06px;top:626.13px;font-size:10px;color:#605e5c;transform-origin:100% 85%;transform:rotate(-32deg) scaleX(0.95)">2025 ...</div>
<div class="ab" style="left:1049.46px;top:591px;width:17.2px;height:32.8px;background:#118dff"></div>
<div class="t" style="left:758.66px;width:600px;text-align:center;top:575.74px;font-size:10px;color:#605e5c;font-weight:normal;transform:scaleX(0.93);transform-origin:50% 0;">3 mil. Kč</div>
<div class="t" style="right:244.64px;top:626.13px;font-size:10px;color:#605e5c;transform-origin:100% 85%;transform:rotate(-32deg) scaleX(0.95)">2025 ...</div>
<div class="ab" style="left:1070.88px;top:592px;width:17.2px;height:31.8px;background:#118dff"></div>
<div class="t" style="right:223.22px;top:626.13px;font-size:10px;color:#605e5c;transform-origin:100% 85%;transform:rotate(-32deg) scaleX(0.95)">2025 ...</div>
<div class="ab" style="left:1092.30px;top:589px;width:17.2px;height:34.8px;background:#118dff"></div>
<div class="t" style="left:801.50px;width:600px;text-align:center;top:573.74px;font-size:10px;color:#605e5c;font-weight:normal;transform:scaleX(0.93);transform-origin:50% 0;">3 mil. Kč</div>
<div class="t" style="right:201.80px;top:626.13px;font-size:10px;color:#605e5c;transform-origin:100% 85%;transform:rotate(-32deg) scaleX(0.95)">2025 ...</div>
<div class="ab" style="left:1113.72px;top:589.6px;width:17.2px;height:34.2px;background:#118dff"></div>
<div class="t" style="right:180.38px;top:626.13px;font-size:10px;color:#605e5c;transform-origin:100% 85%;transform:rotate(-32deg) scaleX(0.95)">2025 č...</div>
<div class="ab" style="left:1135.14px;top:595.9px;width:17.2px;height:27.9px;background:#118dff"></div>
<div class="t" style="left:844.34px;width:600px;text-align:center;top:580.63px;font-size:10px;color:#605e5c;font-weight:normal;transform:scaleX(0.93);transform-origin:50% 0;">3 mil. Kč</div>
<div class="t" style="right:158.96px;top:626.13px;font-size:10px;color:#605e5c;transform-origin:100% 85%;transform:rotate(-32deg) scaleX(0.95)">2025 č...</div>
<div class="ab" style="left:41px;top:716px;width:1259px;height:16px;background:#efefef"></div>
</body></html>
